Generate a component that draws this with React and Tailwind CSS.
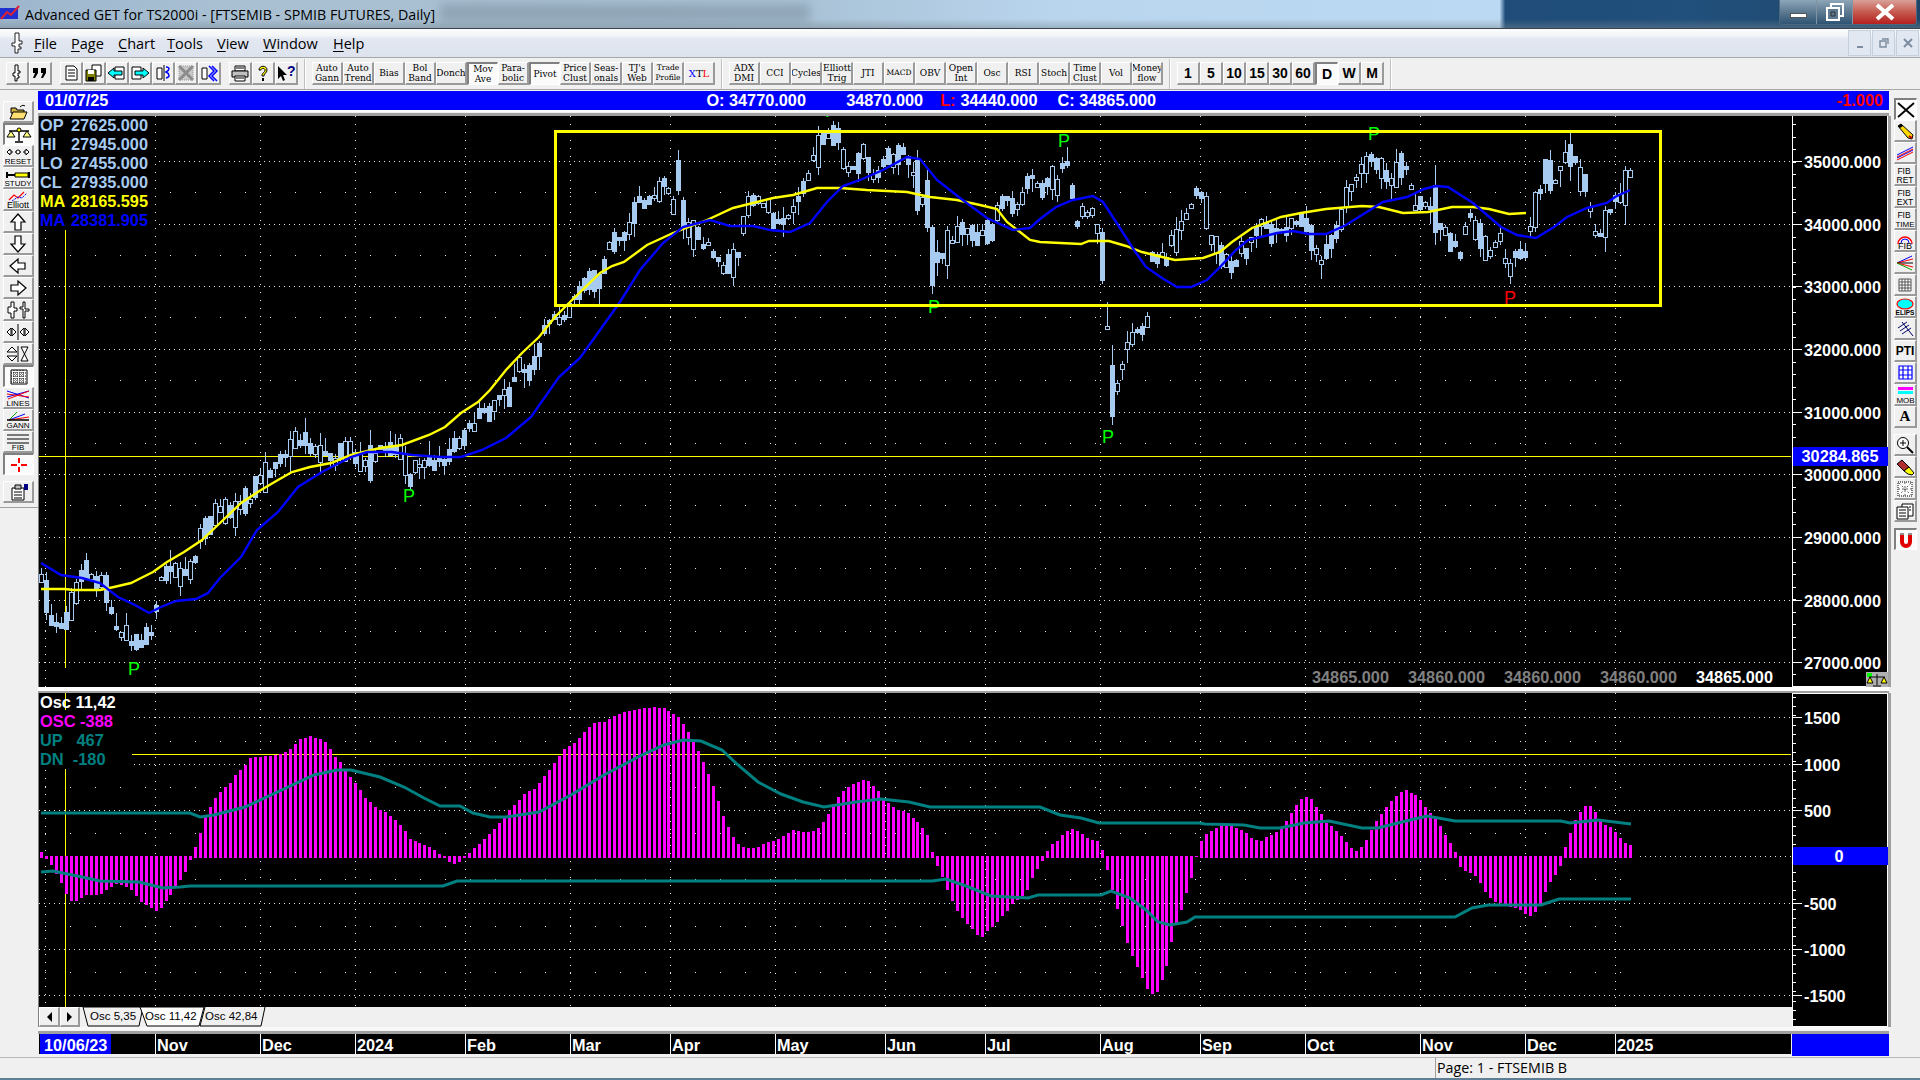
import React from 'react';
import clsx from 'clsx';

const PRICE = [41,580,45,593,51,620,57,630,65,620,69,617,75,593,84,567,92,577,105,583,110,608,118,633,135,640,143,643,151,630,155,610,161,580,171,562,180,577,190,570,196,557,201,533,210,520,222,503,229,513,239,508,251,497,261,475,270,470,282,457,294,445,306,443,316,455,327,450,335,457,345,447,359,460,369,460,380,447,390,452,400,450,406,467,410,475,416,463,429,460,441,463,449,457,455,445,465,437,471,427,486,410,496,407,501,393,508,400,515,378,520,365,531,375,535,362,541,337,547,317,565,317,571,307,580,293,588,277,600,277,606,260,612,240,626,233,633,217,640,200,648,203,656,190,666,183,670,200,677,210,681,207,689,227,697,233,707,247,724,270,732,257,736,267,750,190,756,203,766,207,781,230,791,207,797,203,805,183,815,157,820,137,836,137,840,150,846,163,856,173,864,147,870,170,875,180,885,153,895,163,901,150,911,167,915,187,924,200,930,253,940,253,950,243,960,227,968,227,975,243,985,227,991,237,1001,203,1009,197,1015,210,1021,197,1030,177,1040,187,1050,177,1056,190,1062,170,1065,163,1070,173,1077,220,1085,213,1095,210,1100,256,1105,320,1112,395,1117,385,1122,365,1127,345,1135,335,1141,335,1145,322,1150,260,1156,260,1166,257,1170,243,1181,230,1185,222,1191,203,1197,192,1205,207,1211,243,1220,250,1230,263,1236,267,1240,250,1250,247,1256,233,1264,217,1270,230,1285,227,1305,220,1309,237,1317,257,1322,257,1331,240,1336,230,1342,217,1348,190,1356,183,1362,167,1370,153,1374,155,1381,172,1391,178,1401,162,1405,160,1410,185,1415,208,1423,197,1434,210,1440,227,1446,235,1455,240,1460,252,1466,223,1470,217,1480,237,1485,243,1489,252,1495,240,1500,237,1505,257,1510,268,1515,257,1521,255,1526,252,1530,227,1535,208,1540,187,1545,168,1550,160,1555,178,1560,172,1565,160,1570,155,1575,160,1581,182,1586,188,1591,217,1596,237,1600,232,1605,220,1610,207,1615,197,1620,202,1626,172,1631,173];

const YELLOW = [41,589,65,589,73,590,100,590,114,587,131,583,141,578,153,572,167,562,184,552,202,540,220,523,241,503,261,490,278,480,292,472,310,467,331,463,351,455,380,448,402,445,429,435,445,427,461,413,478,402,490,390,506,370,522,353,539,337,555,317,569,303,600,273,612,266,624,262,647,245,673,233,707,220,733,208,753,203,773,198,793,195,817,188,840,188,867,190,907,192,930,197,957,200,980,205,997,209,1007,222,1020,232,1030,240,1040,242,1081,244,1089,241,1109,241,1126,246,1142,252,1162,257,1175,260,1203,258,1220,252,1232,242,1252,228,1281,217,1301,213,1326,209,1362,206,1379,207,1403,213,1428,212,1452,207,1473,207,1489,209,1509,214,1526,213];

const BLUE = [41,563,61,575,82,578,100,583,118,597,135,605,149,613,161,607,176,601,196,599,208,593,220,578,241,557,257,530,278,512,298,487,322,472,351,457,367,452,392,452,412,455,441,457,461,457,482,450,506,438,531,417,559,377,580,358,600,330,620,302,640,270,663,243,683,227,710,220,730,226,753,226,770,230,790,232,810,223,827,202,843,186,860,180,883,170,907,157,920,159,937,180,960,198,987,218,1013,230,1030,228,1040,219,1056,207,1073,200,1093,196,1103,202,1118,225,1134,250,1146,267,1162,278,1177,287,1191,287,1207,280,1220,267,1236,250,1248,240,1277,233,1293,231,1309,234,1326,234,1346,225,1362,215,1383,202,1407,197,1424,189,1436,186,1448,187,1473,203,1501,227,1517,235,1536,238,1554,227,1567,217,1587,208,1607,203,1615,197,1630,190];

const OSC = [41,852,45,858,51,865,61,883,69,900,75,902,86,895,100,895,106,890,118,883,131,890,141,902,155,911,161,908,171,893,180,880,186,870,191,857,195,847,200,833,205,817,210,807,215,798,220,792,225,787,231,782,235,775,245,765,250,758,255,757,273,756,286,752,291,748,300,739,310,736,320,739,326,743,331,751,335,757,341,763,351,778,356,784,361,791,365,798,371,803,375,807,386,813,396,821,401,826,406,832,410,839,420,843,431,848,436,852,441,856,446,860,451,863,456,864,460,861,465,855,470,852,480,843,490,833,500,822,506,813,515,804,524,794,535,788,545,775,555,762,560,755,565,748,575,742,586,730,595,722,604,722,610,718,624,712,637,709,654,707,664,708,675,715,680,719,685,727,690,735,695,745,700,755,705,766,710,779,715,791,720,808,725,821,730,831,736,842,740,846,745,848,756,848,764,843,775,841,785,835,790,831,795,830,805,833,815,830,821,825,826,818,830,810,836,800,840,794,850,785,865,779,876,788,881,795,885,800,895,809,905,812,910,814,915,820,921,827,926,832,930,844,934,860,941,874,945,886,950,897,955,907,960,916,965,922,970,927,975,933,981,938,985,933,991,928,996,923,1001,917,1006,912,1011,905,1015,902,1026,892,1030,882,1036,870,1041,863,1045,855,1050,845,1055,843,1060,837,1065,833,1070,829,1075,830,1081,833,1086,837,1091,840,1096,840,1101,846,1105,862,1110,882,1115,902,1121,922,1126,940,1130,952,1135,962,1141,976,1146,988,1151,994,1156,994,1161,984,1166,966,1170,946,1175,928,1181,910,1186,893,1191,878,1195,860,1200,843,1205,835,1215,828,1226,823,1235,828,1245,832,1250,837,1255,840,1260,842,1266,837,1276,832,1280,829,1285,823,1290,815,1295,806,1300,800,1305,797,1310,798,1315,805,1321,814,1325,822,1331,826,1336,831,1340,835,1345,841,1350,847,1356,851,1360,848,1365,842,1370,832,1375,822,1381,814,1385,808,1390,802,1395,797,1400,793,1405,789,1410,792,1415,795,1421,801,1425,807,1431,814,1435,817,1440,826,1445,835,1450,843,1455,852,1460,867,1465,871,1470,873,1476,877,1481,884,1485,892,1490,898,1495,902,1500,903,1510,907,1521,910,1526,915,1531,916,1536,911,1541,902,1545,892,1550,882,1555,875,1561,864,1565,847,1570,833,1574,822,1580,812,1585,806,1590,806,1595,812,1600,819,1605,825,1610,827,1615,832,1620,838,1625,843,1630,845];

const TEAL_UP = [41,813,190,813,200,817,214,815,245,807,286,788,314,775,337,770,351,770,380,777,404,787,424,798,440,806,460,806,473,813,490,817,506,817,539,812,571,795,604,775,640,756,664,745,683,740,701,741,722,750,738,765,758,782,781,794,803,802,824,807,856,802,881,799,909,802,930,807,1040,807,1060,815,1081,818,1099,823,1199,823,1205,824,1244,825,1260,828,1280,828,1304,823,1329,821,1362,828,1378,828,1402,822,1427,816,1455,821,1561,821,1570,823,1598,820,1631,824];

const TEAL_DN = [41,872,53,871,82,877,100,881,139,882,163,888,180,887,190,886,443,886,457,881,932,881,946,879,966,886,991,896,1028,898,1038,895,1101,895,1111,891,1130,898,1146,910,1158,922,1170,925,1187,922,1195,917,1455,917,1472,908,1488,905,1541,905,1559,899,1631,899];

// [x, bodyTop, bodyBottom, wickTop, wickBottom, filled]
const BIG = [[46,580,612,572,620,1],[931,227,285,225,294,1],[926,180,227,170,232,1],[916,160,210,150,215,1],[1102,232,280,228,284,1],[1107,326,329,302,330,0],[1112,365,416,345,425,1],[1146,316,327,312,328,0],[1434,185,232,165,245,1],[1348,187,207,180,213,0],[1550,160,190,150,194,1],[1626,170,205,166,225,0],[1631,170,177,168,178,0],[820,135,167,126,175,0],[836,128,142,122,150,1],[680,160,190,150,195,1]];

const GRID_Y = [161, 224, 286, 349, 412, 474, 537, 600, 662];
const MINOR_Y = [192, 255, 317, 380, 443, 505, 568, 631];
const MONTH_X = [155, 260, 355, 465, 570, 670, 775, 885, 985, 1100, 1200, 1305, 1420, 1525, 1615];
const OSC_GRID = [717, 764, 810, 903, 949, 995];
const OSC_MINOR = [741, 787, 833, 879, 926, 972];
const PRICE_TICKS = [[35000, 161], [34000, 224], [33000, 286], [32000, 349], [31000, 412], [30000, 474], [29000, 537], [28000, 600], [27000, 662]];
const OSC_TICKS = [['1500', 717], ['1000', 764], ['500', 810], ['-500', 903], ['-1000', 949], ['-1500', 995]];
const DATES = [['Nov', 155, 260], ['Dec', 260, 355], ['2024', 355, 465], ['Feb', 465, 570], ['Mar', 570, 670], ['Apr', 670, 775], ['May', 775, 885], ['Jun', 885, 985], ['Jul', 985, 1100], ['Aug', 1100, 1200], ['Sep', 1200, 1305], ['Oct', 1305, 1420], ['Nov', 1420, 1525], ['Dec', 1525, 1615], ['2025', 1615, 1790]];

const interp = (pts, x) => {
  for (let i = 0; i < pts.length - 2; i += 2) {
    if (x <= pts[i + 2]) {
      const t = (x - pts[i]) / (pts[i + 2] - pts[i] || 1);
      return pts[i + 1] + (pts[i + 3] - pts[i + 1]) * Math.max(t, 0);
    }
  }
  return pts[pts.length - 1];
};

const toPoints = (pts) => {
  const out = [];
  for (let i = 0; i < pts.length; i += 2) out.push(`${pts[i]},${pts[i + 1]}`);
  return out.join(' ');
};

const seeded = (s) => () => {
  s = (s * 1664525 + 1013904223) % 4294967296;
  return s / 4294967296;
};

const BARS = Array.from({ length: 320 }, (_, i) => Math.round(41 + i * 4.98));

const makeCandles = () => {
  const r = seeded(77);
  return BARS.map((x) => {
    const big = BIG.find((b) => Math.abs(b[0] - x) < 3);
    const c = interp(PRICE, x) + (r() - 0.5) * 10;
    const h = 1.5 + r() * r() * 17;
    const top = c - h;
    const bot = c + h;
    const wt = top - r() * r() * 16;
    const wb = bot + r() * r() * 18;
    const filled = r() > 0.5;
    if (big) return { x, top: big[1], bot: big[2], wt: big[3], wb: big[4], filled: !!big[5] };
    return { x, top, bot, wt, wb, filled };
  });
};

const CANDLES = makeCandles();

function Btn({ active, className, children }) {
  return (
    <div
      className={clsx(
        'flex items-center justify-center overflow-hidden shrink-0',
        active
          ? 'bg-[#fbfbfb] border-t-2 border-l-2 border-r border-b border-t-[#808080] border-l-[#808080] border-r-white border-b-white'
          : 'bg-[#f0f0f0] border-t border-l border-r-2 border-b-2 border-t-white border-l-white border-r-[#9a9a9a] border-b-[#9a9a9a]',
        className,
      )}
    >
      {children}
    </div>
  );
}

function LabelBtn({ a, b, active, small }) {
  return (
    <Btn active={active} className="w-[31px] h-[23px]">
      <div className={clsx("flex flex-col items-center font-['DejaVu_Serif',serif] text-black leading-[10px] whitespace-nowrap", small ? 'text-[7.5px]' : 'text-[9px]')}>
        <span>{a}</span>
        {b && <span>{b}</span>}
      </div>
    </Btn>
  );
}

function NumBtn({ children, active }) {
  return (
    <Btn active={active} className="w-[23px] h-[23px]">
      <span className="mt-[1px] text-[14px] font-bold text-black">{children}</span>
    </Btn>
  );
}

function Ico({ children, w = 20, h = 18 }) {
  return (
    <svg width={w} height={h} viewBox={`0 0 ${w} ${h}`} className="font-['Liberation_Sans',sans-serif]">
      {children}
    </svg>
  );
}

const PinIcon = ({ color = '#fff' }) => (
  <path d="M8 1h3v6h2v2h-2v3h1v2h-2v3H8v-5H6V9h2z" fill={color} stroke="#000" strokeWidth="1" />
);

const Sep = () => <div className="w-[2px] h-[30px] mx-[6px] border-l border-[#c0c0c0] bg-white shrink-0" />;

function TopToolbar() {
  return (
    <div className="h-[33px] shrink-0 flex items-center pl-[6px] bg-[#f0f0f0] border-t border-b border-[#a8a8a8] font-['Liberation_Sans',sans-serif]">
      <Btn className="w-[23px] h-[23px]"><Ico><PinIcon /></Ico></Btn>
      <Btn className="w-[23px] h-[23px]"><Ico><path d="M3 4h5v5l-3 5H3l2-5H3zM11 4h5v5l-3 5h-2l2-5h-2z" fill="#000" /></Ico></Btn>
      <div className="w-[8px]" />
      <Btn className="w-[23px] h-[23px]"><Ico><path d="M5 2h8l3 3v11H5z" fill="#fff" stroke="#000" /><path d="M7 6h7M7 9h7M7 12h7" stroke="#000" /></Ico></Btn>
      <Btn className="w-[23px] h-[23px]"><Ico><path d="M8 1h9v11H8z" fill="#fff" stroke="#000" /><path d="M2 6h10v11H2z" fill="#808000" stroke="#000" /><path d="M4 6h6v4H4z" fill="#fff" /><path d="M4 13h6v4H4z" fill="#000" /></Ico></Btn>
      <Btn className="w-[23px] h-[23px]"><Ico><path d="M8 3h9v12H8z" fill="#fff" stroke="#000" /><path d="M1 9l6-5v3h8v4H7v3z" fill="#00ffff" stroke="#000" /></Ico></Btn>
      <Btn className="w-[23px] h-[23px]"><Ico><path d="M2 3h9v12H2z" fill="#fff" stroke="#000" /><path d="M19 9l-6-5v3H5v4h8v3z" fill="#00ffff" stroke="#000" /></Ico></Btn>
      <Btn className="w-[23px] h-[23px]"><Ico><path d="M4 4h5v11H4z" fill="#fff" stroke="#000" /><path d="M11 1v16" stroke="#000" /><path d="M13 3c4 0 4 3 0 5 4 2 4 5 0 6" fill="none" stroke="#0000ff" strokeWidth="1.5" /></Ico></Btn>
      <Btn className="w-[23px] h-[23px]"><Ico><path d="M3 2h14v14H3z" fill="#c8c8c8" /><path d="M3 2l14 14M17 2L3 16" stroke="#8c8c8c" strokeWidth="3" /><path d="M3 2h14v14H3z" fill="none" stroke="#999" strokeDasharray="1 1" /></Ico></Btn>
      <Btn className="w-[23px] h-[23px]"><Ico><path d="M3 4h5v11H3z" fill="#fff" stroke="#000" /><path d="M10 2l5 5-5 5 5 5M13 2l5 5-5 5 5 5" fill="none" stroke="#0000ff" strokeWidth="1.5" /></Ico></Btn>
      <div className="w-[8px]" />
      <Btn className="w-[23px] h-[23px]"><Ico><path d="M5 2h10v5H5z" fill="#fff" stroke="#000" /><path d="M2 7h16v6H2z" fill="#c0c0c0" stroke="#000" /><path d="M5 12h10v5H5z" fill="#fff" stroke="#000" /><path d="M6 4h8M6 14h8" stroke="#000" /></Ico></Btn>
      <Btn className="w-[23px] h-[23px]"><Ico><path d="M6 6c0-5 8-5 8 0 0 3-3 3-3 6H9c0-4 3-3 3-6 0-2-4-2-4 0z" fill="#ffff00" stroke="#000" /><path d="M9 14h2v3H9z" fill="#000" /></Ico></Btn>
      <Btn className="w-[23px] h-[23px]"><Ico><path d="M2 2v13l3-3 2 5 2-1-2-5h4z" fill="#000" /><text x="11" y="12" fontSize="14" fontWeight="700" fill="#000080">?</text></Ico></Btn>
      <Sep />
      {[['Auto', 'Gann'], ['Auto', 'Trend'], ['Bias'], ['Bol', 'Band'], ['Donch'], ['Mov', 'Ave', true], ['Para-', 'bolic'], ['Pivot', null, true], ['Price', 'Clust'], ['Seas-', 'onals'], ["TJ's", 'Web'], ['Trade', 'Profile', false, true]].map(([a, b, active, small]) => (
        <LabelBtn key={a + b} a={a} b={b} active={active} small={small} />
      ))}
      <Btn className="w-[31px] h-[23px]">
        <span className="font-['DejaVu_Serif',serif] text-[10px]"><span className="text-[#0000ff]">X</span><span className="text-black">T</span><span className="text-[#ff0000]">L</span></span>
      </Btn>
      <Sep />
      {[['ADX', 'DMI'], ['CCI'], ['Cycles'], ['Elliott', 'Trig'], ['JTI'], ['MACD', null, false, true], ['OBV'], ['Open', 'Int'], ['Osc'], ['RSI'], ['Stoch'], ['Time', 'Clust'], ['Vol'], ['Money', 'flow']].map(([a, b, active, small]) => (
        <LabelBtn key={a} a={a} b={b} active={active} small={small} />
      ))}
      <Sep />
      {['1', '5', '10', '15', '30', '60'].map((n) => <NumBtn key={n}>{n}</NumBtn>)}
      <NumBtn active>D</NumBtn>
      <NumBtn>W</NumBtn>
      <NumBtn>M</NumBtn>
      <Sep />
    </div>
  );
}

function TitleBar() {
  return (
    <div className="relative h-[29px] shrink-0 flex items-start border-b border-[#39424d] bg-[linear-gradient(90deg,#9db6cd_0%,#a9c0d3_12%,#a8bfd1_25%,#a9c2d6_42%,#b9d5ee_55%,#bcd9f3_77%,#bcd9f3_78.1%,#1f4c78_78.4%,#21507c_88%,#1e4568_100%)] overflow-hidden">
      <div className="absolute inset-x-0 bottom-0 h-[9px] bg-[linear-gradient(180deg,rgba(150,165,175,0)_0%,rgba(120,135,145,0.45)_100%)]" />
      <div className="absolute left-[440px] top-[4px] w-[370px] h-[18px] bg-[#6d7f8e] opacity-40 blur-[5px]" />
      <svg width="22" height="18" viewBox="0 0 22 18" className="relative mt-[3px] shrink-0">
        <path d="M0 5h18v11H0z" fill="#1f2fd0" />
        <path d="M1 16l6-7 4 3 8-9" fill="none" stroke="#e02030" strokeWidth="2" />
      </svg>
      <span className="relative ml-[3px] mt-[5px] text-[14.25px] leading-[20px] text-black font-['Open_Sans',sans-serif] whitespace-nowrap">
        Advanced GET for TS2000i - [FTSEMIB - SPMIB FUTURES, Daily]
      </span>
      <div className="relative ml-auto mr-[3px] flex h-[25px] rounded-b-[4px] border border-t-0 border-[#4a6880] overflow-hidden">
        <div className="w-[37px] flex items-end justify-center pb-[6px] border-r border-[#7f93a5] bg-[linear-gradient(180deg,#8da5b8_0%,#5d7a92_50%,#2f5474_100%)]">
          <div className="w-[17px] h-[5px] bg-white border border-[#555]" />
        </div>
        <div className="w-[36px] flex items-center justify-center border-r border-[#7f93a5] bg-[linear-gradient(180deg,#8da5b8_0%,#5d7a92_50%,#2f5474_100%)]">
          <svg width="20" height="18" viewBox="0 0 20 18"><path d="M6 1h12v12H6z" fill="none" stroke="#fff" strokeWidth="2" /><path d="M2 5h12v12H2z" fill="#5d7a92" stroke="#fff" strokeWidth="2" /><path d="M6 9h4v4H6z" fill="none" stroke="#333" /></svg>
        </div>
        <div className="w-[63px] flex items-center justify-center bg-[linear-gradient(180deg,#d8a098_0%,#c65a50_50%,#b51f1f_100%)]">
          <svg width="22" height="18" viewBox="0 0 22 18"><path d="M3 2l16 14M19 2L3 16" stroke="#fff" strokeWidth="4" /></svg>
        </div>
      </div>
    </div>
  );
}

function MenuBar() {
  const items = [['F', 'ile', 'w-[37px]'], ['P', 'age', 'w-[47px]'], ['C', 'hart', 'w-[49px]'], ['T', 'ools', 'w-[50px]'], ['V', 'iew', 'w-[46px]'], ['W', 'indow', 'w-[70px]'], ['H', 'elp', 'w-[32px]']];
  return (
    <div className="h-[28px] shrink-0 flex items-center bg-[linear-gradient(180deg,#fbfcfd_0%,#f4f6f8_22%,#e2e7f1_36%,#dde3ee_100%)] font-['Open_Sans',sans-serif] text-[14.5px] text-black">
      <svg width="22" height="22" viewBox="0 0 22 22" className="ml-[6px] shrink-0"><path d="M9 1h4v8h3v3h-3v3h2v2h-3v4H9v-7H6v-3h3z" fill="#fff" stroke="#222" /></svg>
      <div className="flex ml-[6px] mt-[2px]">
        {items.map(([u, rest, w]) => (
          <span key={u} className={clsx('whitespace-nowrap', w)}>
            <span className="underline underline-offset-2">{u}</span>{rest}
          </span>
        ))}
      </div>
      <div className="ml-auto flex gap-[1px] pr-[1px]">
        {['min', 'res', 'cls'].map((k) => (
          <div key={k} className="w-[23px] h-[26px] flex items-center justify-center bg-[#e2e8f2] border border-[#c4d0de]">
            {k === 'min' && <div className="w-[6px] h-[2px] mt-[8px] bg-[#7c8ca0]" />}
            {k === 'res' && <svg width="10" height="10" viewBox="0 0 10 10"><path d="M3 1h6v5M1 3h6v6H1z" fill="none" stroke="#7c8ca0" strokeWidth="1.4" /></svg>}
            {k === 'cls' && <svg width="10" height="10" viewBox="0 0 10 10"><path d="M1 1l8 8M9 1L1 9" stroke="#7c8ca0" strokeWidth="2" /></svg>}
          </div>
        ))}
      </div>
    </div>
  );
}

const Arrow = ({ d }) => <Ico w={26} h={18}><path d={d} fill="#fff" stroke="#000" strokeWidth="1.2" /></Ico>;
const Cap = ({ y = 17, size = 8, children, x = 13 }) => (
  <text x={x} y={y} fontSize={size} textAnchor="middle" fill="#000">{children}</text>
);

function LeftToolbar() {
  const tool = 'w-[31px] h-[22px]';
  return (
    <div className="w-[38px] shrink-0 flex flex-col">
      <div className="h-[418px] flex flex-col pl-[3px] pt-[11px] border-b border-[#a0a0a0]">
        <Btn className={tool}><Ico w={26} h={18}><path d="M6 5h5l1 2h7v3H6z" fill="#c8b040" stroke="#000" /><path d="M5 16l3-7h14l-3 7z" fill="#ffe070" stroke="#000" /><path d="M15 4c2-2 4-2 5-1" fill="none" stroke="#000" /></Ico></Btn>
        <Btn active className={tool}><Ico w={26} h={18}><path d="M13 3v12M3 5h20M9 16h8" stroke="#000" strokeWidth="1.4" /><path d="M1 11l4-6 4 6zM17 11l4-6 4 6z" fill="#ffff80" stroke="#000" /><circle cx="13" cy="4" r="2" fill="#ffff00" stroke="#000" /></Ico></Btn>
        <Btn className={tool}><Ico w={26} h={18}><path d="M2 5l3-3v2h2v2H5v2zM24 5l-3-3v2h-2v2h2v2zM10 5h6" fill="#fff" stroke="#000" /><circle cx="13" cy="5" r="2" fill="#fff" stroke="#000" /><Cap>RESET</Cap></Ico></Btn>
        <Btn className={tool}><Ico w={26} h={18}><path d="M2 3v6M24 3v6" stroke="#000" strokeWidth="2" /><path d="M3 5h7v2H3z" fill="#000" /><path d="M10 4h13v4H10z" fill="#ffff00" stroke="#000" /><Cap>STUDY</Cap></Ico></Btn>
        <Btn className={tool}><Ico w={26} h={18}><path d="M4 9l5-5 4 3 6-6" fill="none" stroke="#f00" strokeWidth="1.2" /><path d="M7 10l6-4 4 1 5-5" fill="none" stroke="#00f" strokeDasharray="2 1" /><Cap size={9}>Elliott</Cap></Ico></Btn>
        <Btn className={tool}><Arrow d="M13 1l7 8h-4v8h-6V9H6z" /></Btn>
        <Btn className={tool}><Arrow d="M13 17l7-8h-4V1h-6v8H6z" /></Btn>
        <Btn className={tool}><Arrow d="M5 9l8-7v4h7v6h-7v4z" /></Btn>
        <Btn className={tool}><Arrow d="M21 9l-8-7v4H6v6h7v4z" /></Btn>
        <Btn className={tool}><Ico w={26} h={18}><path d="M6 1h3v6h3v3H9v7H6v-5H3V6h3zM18 1h2v7h4v2h-4v7h-2v-9h-3V6h3z" fill="#fff" stroke="#000" /></Ico></Btn>
        <Btn className={tool}><Ico w={26} h={18}><path d="M13 1v16" stroke="#000" /><path d="M2 9l4-4v8zM11 9L7 5v8zM15 9l4-4v8zM24 9l-4-4v8z" fill="#fff" stroke="#000" /></Ico></Btn>
        <Btn className={tool}><Ico w={26} h={18}><path d="M13 1v16" stroke="#000" /><path d="M3 7l5-5 5 5zM3 11l5 5 5-5z" fill="#fff" stroke="#000" transform="translate(-1 0)" /><path d="M16 2h7l-7 14h7z" fill="#fff" stroke="#000" /></Ico></Btn>
        <Btn active className={tool}><Ico w={26} h={18}><path d="M5 2h16v14H5z" fill="#fff" stroke="#000" /><path d="M5 5h16M5 8h16M5 11h16M5 14h16M8 2v14M11 2v14M14 2v14M17 2v14" stroke="#000" strokeDasharray="1 1" /></Ico></Btn>
        <Btn className={tool}><Ico w={26} h={18}><path d="M2 2l22 7M2 8l22-6" stroke="#00f" fill="none" /><path d="M2 5l22 3M3 10l21-8" stroke="#f00" fill="none" /><Cap>LINES</Cap></Ico></Btn>
        <Btn className={tool}><Ico w={26} h={18}><path d="M4 9L12 1" stroke="#0a0" /><path d="M4 9L20 3" stroke="#00f" /><path d="M4 9l20-3" stroke="#f00" /><path d="M2 9h22" stroke="#000" strokeWidth="1.5" /><Cap>GANN</Cap></Ico></Btn>
        <Btn className={tool}><Ico w={26} h={18}><path d="M2 2h22M2 6h22M2 10h22" stroke="#000" /><Cap>FIB</Cap></Ico></Btn>
        <Btn active className={tool}><Ico w={26} h={18}><path d="M13 2v5M13 11v5M5 9h6M15 9h6" stroke="#f00" strokeWidth="2" /></Ico></Btn>
        <div className="h-[6px]" />
        <Btn className={tool}><Ico w={26} h={18}><path d="M7 5h12v12H7z" fill="#fff" stroke="#000" /><path d="M10 2h6v4h-6z" fill="#c0c0c0" stroke="#000" /><path d="M9 9h8M9 12h8M9 15h8" stroke="#000" /><path d="M19 1h4v6h-4z" fill="#000080" /></Ico></Btn>
      </div>
    </div>
  );
}

function RightToolbar() {
  const tool = 'w-[23px] h-[22px]';
  return (
    <div className="w-[29px] shrink-0 flex flex-col pl-[3px] pt-[8px]">
      <Btn active className={tool}><Ico w={20} h={18}><path d="M2 2l16 14M18 2L2 16" stroke="#000" strokeWidth="1.8" /></Ico></Btn>
      <Btn className={tool}><Ico w={20} h={18}><path d="M3 4l3-2 12 11-1 4-4-1z" fill="#ffd800" stroke="#000" /><path d="M3 4l3-2 2 2-3 2z" fill="#000" /><path d="M14 14l3 2" stroke="#c00" strokeWidth="2" /></Ico></Btn>
      <Btn className={tool}><Ico w={20} h={18}><path d="M2 11L18 3M2 14l16-8" stroke="#00f" /><path d="M2 13L18 5M2 16l16-8" stroke="#f00" /></Ico></Btn>
      <Btn className={tool}><Ico w={20} h={18}><text x="9" y="8" fontSize="8.5" textAnchor="middle">FIB</text><text x="10" y="17" fontSize="8.5" textAnchor="middle">RET</text></Ico></Btn>
      <Btn className={tool}><Ico w={20} h={18}><text x="9" y="8" fontSize="8.5" textAnchor="middle">FIB</text><text x="10" y="17" fontSize="8.5" textAnchor="middle">EXT</text></Ico></Btn>
      <Btn className={tool}><Ico w={20} h={18}><text x="9" y="8" fontSize="8.5" textAnchor="middle">FIB</text><text x="10" y="17" fontSize="8" textAnchor="middle">TIME</text></Ico></Btn>
      <Btn className={tool}><Ico w={20} h={18}><path d="M3 12a7 7 0 0 1 14 0" fill="none" stroke="#f00" strokeWidth="1.4" /><path d="M6 11a4 4 0 0 1 8 0" fill="none" stroke="#00f" /><text x="10" y="17" fontSize="9" textAnchor="middle">FIB</text></Ico></Btn>
      <Btn className={tool}><Ico w={20} h={18}><path d="M2 9L17 2" stroke="#00f" /><path d="M2 9l16-4" stroke="#f00" /><path d="M2 9h16" stroke="#000" /><path d="M2 9l16 4" stroke="#f00" /><path d="M2 9l15 7" stroke="#0a0" /></Ico></Btn>
      <Btn className={tool}><Ico w={20} h={18}><path d="M4 3h12v12H4zM4 6h12M4 9h12M4 12h12M7 3v12M10 3v12M13 3v12" fill="#fff" stroke="#555" /></Ico></Btn>
      <Btn className={tool}><Ico w={20} h={18}><ellipse cx="10" cy="6" rx="8" ry="5" fill="#00ffff" stroke="#f00" strokeWidth="1.2" /><text x="10" y="17" fontSize="6.5" fontWeight="700" textAnchor="middle">ELIPS</text></Ico></Btn>
      <Btn className={tool}><Ico w={20} h={18}><path d="M3 8l9-6M5 11l9-6M7 14l9-6M7 2l11 14" stroke="#006" fill="none" /></Ico></Btn>
      <Btn className={tool}><span className="text-[12px] font-bold text-black">PTI</span></Btn>
      <Btn className={tool}><Ico w={20} h={18}><path d="M4 2h13v13H4zM4 6h13M4 11h13M8 2v13M13 2v13" fill="#fff" stroke="#00f" strokeWidth="1.2" /></Ico></Btn>
      <Btn className={tool}><Ico w={20} h={18}><path d="M3 1h15v3H3z" fill="#ff00ff" /><path d="M3 5h15v3H3z" fill="#00ffff" /><text x="10.5" y="17" fontSize="8" textAnchor="middle">MOB</text></Ico></Btn>
      <Btn className={tool}><span className="text-[15px] font-bold font-['Liberation_Serif',serif] text-black">A</span></Btn>
      <div className="h-[6px]" />
      <Btn className={tool}><Ico w={20} h={18}><circle cx="8" cy="7" r="5.5" fill="#fff" stroke="#000" /><path d="M8 4v6M5 7h6" stroke="#000" /><path d="M12 11l6 6" stroke="#000" strokeWidth="2" /></Ico></Btn>
      <Btn className={tool}><Ico w={20} h={18}><path d="M2 6l5-4 7 7-5 4z" fill="#b03030" stroke="#000" /><path d="M9 13l5-4 5 6-2 2-4-1z" fill="#ffff00" stroke="#000" /></Ico></Btn>
      <Btn className={tool}><Ico w={20} h={18}><path d="M3 2h14v14H3z" fill="#fff" stroke="#000" strokeDasharray="1 1" /><path d="M4 3l12 12M16 3L4 15M3 9h14M10 2v14" stroke="#666" strokeDasharray="2 2" /></Ico></Btn>
      <Btn className={tool}><Ico w={20} h={18}><path d="M7 2h11v12H7z" fill="#fff" stroke="#000" /><path d="M2 5h11v12H2z" fill="#fff" stroke="#000" /><path d="M4 8h7M4 11h7M4 14h7M14 5h2M14 8h2" stroke="#000" /></Ico></Btn>
      <div className="h-[6px]" />
      <Btn active className={tool}><Ico w={20} h={18}><path d="M4 2h4v9a2 2 0 0 0 4 0V2h4v9a6 6 0 0 1-12 0z" fill="#e00000" /><path d="M4 2h4v2H4zM12 2h4v2h-4z" fill="#909090" /></Ico></Btn>
    </div>
  );
}

function PriceChart() {
  return (
    <svg width="1753" height="571" viewBox="39 116 1753 571" className="block bg-black shrink-0 font-['Liberation_Sans',sans-serif]">
      <g stroke="#e8e8e8" strokeWidth="1" shapeRendering="crispEdges">
        {GRID_Y.map((y) => <line key={y} x1="39" x2="1791" y1={y + 0.5} y2={y + 0.5} strokeDasharray="1 4" />)}
        {MINOR_Y.map((y) => <line key={y} x1="45" x2="1630" y1={y + 0.5} y2={y + 0.5} strokeDasharray="1 24" />)}
        {MONTH_X.map((x) => <line key={x} x1={x + 0.5} x2={x + 0.5} y1="116" y2="687" strokeDasharray="1 7" />)}
        <line x1="45.5" x2="45.5" y1="230" y2="687" strokeDasharray="1 7" />
      </g>
      <rect x="39" y="116" width="116" height="114" fill="#000" />
      <line x1="65.5" x2="65.5" y1="230" y2="668" stroke="#ffff00" />
      <line x1="39" x2="1791" y1="456.5" y2="456.5" stroke="#ffff00" />
      <g stroke="#a6caf0" fill="none" shapeRendering="crispEdges">
        {CANDLES.map((c) => {
          const top = Math.round(c.top);
          const bot = Math.round(c.bot);
          return (
            <g key={c.x}>
              <line x1={c.x + 0.5} x2={c.x + 0.5} y1={Math.round(c.wt)} y2={Math.round(c.wb)} />
              <rect x={c.x - 1.5} y={top + 0.5} width="4" height={Math.max(bot - top, 1)} fill={c.filled ? '#a6caf0' : '#000'} />
            </g>
          );
        })}
      </g>
      <polyline points={toPoints(YELLOW)} fill="none" stroke="#ffff00" strokeWidth="2.4" />
      <polyline points={toPoints(BLUE)} fill="none" stroke="#0000ff" strokeWidth="2.4" />
      <g fontSize="18" fontWeight="400" fill="#00ff00" textAnchor="middle">
        <text x="134" y="675">P</text>
        <text x="409" y="502">P</text>
        <text x="934" y="313">P</text>
        <text x="1108" y="443">P</text>
        <text x="1064" y="147">P</text>
        <text x="1374" y="140">P</text>
        <text x="831" y="117">P</text>
        <text x="1510" y="304" fill="#ff0000">P</text>
      </g>
      <rect x="555.5" y="131.5" width="1105" height="174" fill="none" stroke="#ffff00" strokeWidth="3" />
      <g fontSize="16.3" fontWeight="700" fill="#808080">
        <text x="1312" y="683">34865.000</text>
        <text x="1408" y="683">34860.000</text>
        <text x="1504" y="683">34860.000</text>
        <text x="1600" y="683">34860.000</text>
        <text x="1696" y="683" fill="#fff">34865.000</text>
      </g>
    </svg>
  );
}

function PriceLegend() {
  const rows = [['OP', '27625.000', 'text-[#a6caf0]'], ['HI', '27945.000', 'text-[#a6caf0]'], ['LO', '27455.000', 'text-[#a6caf0]'], ['CL', '27935.000', 'text-[#a6caf0]'], ['MA', '28165.595', 'text-[#ffff00]'], ['MA', '28381.905', 'text-[#0000ff]']];
  return (
    <div className="absolute left-[1px] top-0 flex flex-col text-[16.3px] leading-[19px] font-bold">
      {rows.map(([k, v, c], i) => (
        <div key={i} className={clsx('flex', c)}>
          <span className="w-[31px]">{k}</span>
          <span>{v}</span>
        </div>
      ))}
    </div>
  );
}

function PriceAxis() {
  const minor = Array.from({ length: 46 }, (_, i) => 124 + i * 12.5);
  return (
    <svg width="95" height="571" viewBox="1793 116 95 571" className="block bg-black shrink-0 font-['Liberation_Sans',sans-serif]">
      <g stroke="#fff" shapeRendering="crispEdges">
        {minor.map((y) => <line key={y} x1="1793" x2="1796" y1={Math.round(y) + 0.5} y2={Math.round(y) + 0.5} />)}
        {PRICE_TICKS.map(([, y]) => <line key={y} x1="1793" x2="1802" y1={y + 0.5} y2={y + 0.5} />)}
        <line x1="1793" x2="1866" y1="686.5" y2="686.5" />
        <line x1="1887.5" x2="1887.5" y1="116" y2="687" />
      </g>
      <g fontSize="16.3" fontWeight="700" fill="#fff">
        {PRICE_TICKS.map(([v, y]) => <text key={v} x="1804" y={y + 7}>{v}.000</text>)}
      </g>
      <rect x="1793" y="447" width="95" height="19" fill="#0000ff" />
      <text x="1840" y="462" fontSize="16.3" fontWeight="700" fill="#fff" textAnchor="middle">30284.865</text>
      <rect x="1866" y="672" width="22" height="15" fill="#b0b0b0" />
      <rect x="1867" y="673" width="5" height="4" fill="#00ff00" />
      <path d="M1877 674v11M1869 677h16M1873 686h8" stroke="#000" fill="none" />
      <path d="M1867 683l3-6 3 6zM1881 683l3-6 3 6z" fill="#ffff00" stroke="#000" />
    </svg>
  );
}

function OscChart() {
  return (
    <svg width="1753" height="314" viewBox="39 693 1753 314" className="block bg-black shrink-0 font-['Liberation_Sans',sans-serif]">
      <g stroke="#e8e8e8" shapeRendering="crispEdges">
        {OSC_GRID.map((y) => <line key={y} x1="39" x2="1791" y1={y + 0.5} y2={y + 0.5} strokeDasharray="1 4" />)}
        {OSC_MINOR.map((y) => <line key={y} x1="45" x2="1630" y1={y + 0.5} y2={y + 0.5} strokeDasharray="1 24" />)}
        <line x1="1640" x2="1791" y1="856.5" y2="856.5" strokeDasharray="1 4" />
        {MONTH_X.map((x) => <line key={x} x1={x + 0.5} x2={x + 0.5} y1="693" y2="1007" strokeDasharray="1 7" />)}
        <line x1="45.5" x2="45.5" y1="770" y2="1007" strokeDasharray="1 7" />
      </g>
      <rect x="39" y="710" width="93" height="59" fill="#000" />
      <line x1="65.5" x2="65.5" y1="693" y2="710" stroke="#ffff00" />
      <line x1="65.5" x2="65.5" y1="769" y2="1007" stroke="#ffff00" />
      <line x1="132" x2="1791" y1="754.5" y2="754.5" stroke="#ffff00" />
      <g fill="#ff00ff" shapeRendering="crispEdges">
        {BARS.map((x) => {
          const v = Math.round(interp(OSC, x));
          return v < 857
            ? <rect key={x} x={x - 1} y={v} width="3" height={858 - v} />
            : <rect key={x} x={x - 1} y="856" width="3" height={v - 856} />;
        })}
      </g>
      <polyline points={toPoints(TEAL_UP)} fill="none" stroke="#008080" strokeWidth="3" />
      <polyline points={toPoints(TEAL_DN)} fill="none" stroke="#008080" strokeWidth="3" />
    </svg>
  );
}

function OscLegend() {
  const rows = [['Osc', ' 11,42', 'text-white'], ['OSC', ' -388', 'text-[#ff00ff]'], ['UP', '\u00a0\u00a0 467', 'text-[#008080]'], ['DN', '\u00a0\u00a0-180', 'text-[#008080]']];
  return (
    <div className="absolute left-[1px] top-0 flex flex-col text-[16.4px] leading-[19px] font-bold">
      {rows.map(([k, v, c]) => <div key={k} className={clsx('whitespace-pre', c)}>{k}{v}</div>)}
    </div>
  );
}

function OscAxis() {
  const minor = Array.from({ length: 36 }, (_, i) => 697 + i * 9.2);
  return (
    <svg width="95" height="334" viewBox="1793 693 95 334" className="block bg-black shrink-0 font-['Liberation_Sans',sans-serif]">
      <g stroke="#fff" shapeRendering="crispEdges">
        {minor.map((y) => <line key={y} x1="1793" x2="1796" y1={Math.round(y) + 0.5} y2={Math.round(y) + 0.5} />)}
        {OSC_TICKS.map(([, y]) => <line key={y} x1="1793" x2="1802" y1={y + 0.5} y2={y + 0.5} />)}
        <line x1="1793" x2="1888" y1="693.5" y2="693.5" />
        <line x1="1887.5" x2="1887.5" y1="693" y2="1027" />
        <line x1="1793" x2="1888" y1="1026.5" y2="1026.5" />
      </g>
      <g fontSize="16.3" fontWeight="700" fill="#fff">
        {OSC_TICKS.map(([v, y]) => <text key={v} x="1804" y={y + 7}>{v}</text>)}
      </g>
      <rect x="1793" y="847" width="95" height="18" fill="#0000ff" />
      <text x="1839" y="862" fontSize="16.3" fontWeight="700" fill="#fff" textAnchor="middle">0</text>
    </svg>
  );
}

function TabStrip() {
  return (
    <div className="h-[20px] flex bg-[#f0f0f0] font-['Liberation_Sans',sans-serif]">
      <Btn className="w-[21px] h-[20px]"><div className="w-0 h-0 border-y-[5px] border-y-transparent border-r-[5px] border-r-black" /></Btn>
      <Btn className="w-[20px] h-[20px]"><div className="w-0 h-0 border-y-[5px] border-y-transparent border-l-[5px] border-l-black" /></Btn>
      <svg width="200" height="20" viewBox="0 0 200 20" className="ml-[2px] block">
        <path d="M1 0l5 19h51l4-19z" fill="#f0f0f0" stroke="#000" />
        <path d="M122 0l-5 19h-52L58 0z" fill="#fff" stroke="#000" />
        <path d="M123 0l-5 19h61l4-19" fill="#f0f0f0" stroke="#000" />
        <g fontSize="11.5" fill="#000">
          <text x="8" y="13">Osc 5,35</text>
          <text x="63" y="13">Osc 11,42</text>
          <text x="123" y="13">Osc 42,84</text>
        </g>
      </svg>
    </div>
  );
}

export default function App() {
  return (
    <div className="w-[1920px] h-[1080px] flex flex-col overflow-hidden bg-[#f0f0f0] font-['Liberation_Sans',sans-serif]">
      <TitleBar />
      <MenuBar />
      <TopToolbar />
      <div className="flex h-[967px] shrink-0">
        <LeftToolbar />
        <div className="w-[1853px] shrink-0 flex flex-col pt-[1px]">
          <div className="w-[1851px] h-[19px] flex items-center bg-[#0000ff] text-white text-[16.3px] font-bold leading-[19px] whitespace-nowrap">
            <span className="ml-[7px]">01/07/25</span>
            <span className="ml-[598px]">O: 34770.000</span>
            <span className="ml-[17px] mr-[6px] text-[#0000ff]">H:</span>
            <span>34870.000</span>
            <span className="ml-[17px] text-[#ff0000]">L:</span>
            <span className="ml-[5px]">34440.000</span>
            <span className="ml-[20px]">C: 34865.000</span>
            <span className="ml-auto mr-[6px] text-[#ff0000]">-1.000</span>
          </div>
          <div className="w-[1851px] h-[6px] border-t-2 border-t-white border-b-[3px] border-b-[#a0a0a0] shrink-0" />
          <div className="flex border-l border-[#808080]">
            <div className="relative">
              <PriceChart />
              <PriceLegend />
            </div>
            <div className="border-l border-white border-r-[3px] border-r-[#a0a0a0]"><PriceAxis /></div>
          </div>
          <div className="w-[1851px] h-[6px] border-t-[4px] border-t-white border-b-2 border-b-[#a0a0a0] shrink-0" />
          <div className="flex border-l border-[#808080]">
            <div className="relative flex flex-col">
              <OscChart />
              <OscLegend />
              <TabStrip />
            </div>
            <div className="border-l border-white border-r-[3px] border-r-[#a0a0a0]"><OscAxis /></div>
          </div>
          <div className="w-[1851px] h-[7px] border-t-[3px] border-t-[#f8f8f8] border-b-[3px] border-b-[#a0a0a0] shrink-0" />
          <div className="flex h-[22px]">
            <div className="w-[1752px] h-[20px] ml-[1px] flex bg-black text-white text-[16.3px] font-bold leading-[22px] border-l border-black">
              <div className="w-[115px]"><span className="inline-block w-[71px] h-[20px] bg-[#0000ff] pl-[4px]">10/06/23</span></div>
              {DATES.map(([m, a, b]) => (
                <div key={a} className="border-l border-white pl-[1px]" style={{ width: b - a }}>{m}</div>
              ))}
            </div>
            <div className="w-[97px] h-[22px] ml-[1px] bg-[#0000ff]" />
          </div>
        </div>
        <RightToolbar />
      </div>
      <div className="h-[21px] shrink-0 flex pl-[1435px] border-t border-[#b8b8b8] bg-[#f0f0f0]">
        <div className="h-full pl-[1px] border-l border-[#a0a0a0] text-[14.3px] leading-[20px] text-black font-['Open_Sans',sans-serif]">Page: 1 - FTSEMIB B</div>
      </div>
      <div className="h-[2px] shrink-0 bg-[#5f7f97]" />
    </div>
  );
}
